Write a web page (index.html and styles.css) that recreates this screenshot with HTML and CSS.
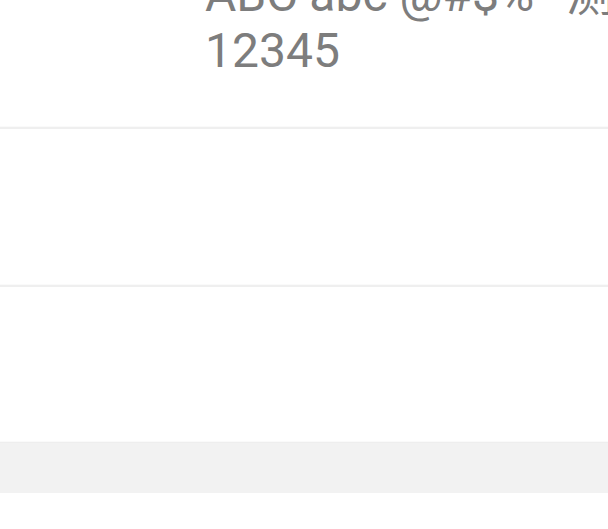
FILE: index.html
```html
<!DOCTYPE html>
<html>
<head>
<meta charset="utf-8">
<link rel="stylesheet" href="styles.css">
</head>
<body>
<div class="list">
  <div class="cell cell-text">
    <div class="sample">ABC abc @#$%^ 测试文字<br>12345</div>
  </div>
  <div class="cell cell-empty"></div>
  <div class="cell cell-empty last"></div>
  <div class="band"></div>
</div>
</body>
</html>
```
FILE: styles.css
```css
html, body {
  margin: 0;
  padding: 0;
  background: #ffffff;
  overflow: hidden;
}
.list {
  display: flex;
  flex-direction: column;
  margin-top: -33px;
}
.cell {
  border-bottom: 2px solid #efefef;
  box-shadow: 0 -4px 0 -3px #fafafa inset;
}
.cell-text {
  padding: 0 0 46px 205px;
  height: 114px;
}
.sample {
  font-family: Roboto, "Noto Sans CJK SC", sans-serif;
  font-size: 48px;
  line-height: 56px;
  color: #7d7d7d;
  white-space: nowrap;
}
.cell-empty {
  height: 156px;
}
.cell-empty.last {
  height: 155px;
  border-bottom: none;
}
.band {
  height: 51px;
  background: #f2f2f2;
  border-top: 1px solid #eeeeee;
  box-sizing: border-box;
}
```
